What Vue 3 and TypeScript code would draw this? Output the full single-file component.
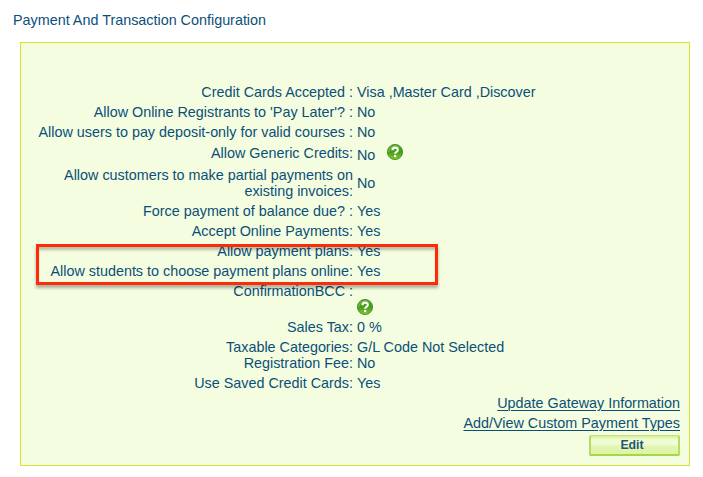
<script setup lang="ts">
interface Row {
  label: string
  value: string
  kind?: string
  help?: boolean
}

const rows: Row[] = [
  { label: 'Credit Cards Accepted :', value: 'Visa ,Master Card ,Discover' },
  { label: "Allow Online Registrants to 'Pay Later'? :", value: 'No' },
  { label: 'Allow users to pay deposit-only for valid courses :', value: 'No' },
  { label: 'Allow Generic Credits:', value: 'No', kind: 'credits', help: true },
  { label: 'Allow customers to make partial payments on existing invoices:', value: 'No', kind: 'double' },
  { label: 'Force payment of balance due? :', value: 'Yes' },
  { label: 'Accept Online Payments:', value: 'Yes' },
  { label: 'Allow payment plans:', value: 'Yes' },
  { label: 'Allow students to choose payment plans online:', value: 'Yes' },
  { label: 'ConfirmationBCC :', value: '', kind: 'bcc', help: true },
  { label: 'Sales Tax:', value: '0 %' },
  { label: 'Taxable Categories:', value: 'G/L Code Not Selected', kind: 'tight' },
  { label: 'Registration Fee:', value: 'No', kind: 'tight-low' },
  { label: 'Use Saved Credit Cards:', value: 'Yes' },
]
</script>

<template>
  <main class="page">
    <h1 class="title">Payment And Transaction Configuration</h1>
    <section class="panel">
      <div v-for="row in rows" :key="row.label" class="row" :class="row.kind">
        <div class="label">{{ row.label }}</div>
        <div class="value">
          <span v-if="row.value">{{ row.value }}</span>
          <svg v-if="row.help" class="help" viewBox="0 0 16 16" role="img" aria-label="Help">
            <defs>
              <linearGradient :id="'g-' + row.kind" x1="0" y1="0" x2="0" y2="1">
                <stop offset="0" stop-color="#4c9d20" />
                <stop offset="0.5" stop-color="#479d17" />
                <stop offset="1" stop-color="#86c838" />
              </linearGradient>
            </defs>
            <circle cx="8" cy="8" r="7.6" :fill="`url(#g-${row.kind})`" stroke="#358514" stroke-width="0.8" />
            <path d="M1.7 8A6.3 6.3 0 0 1 12.5 3.7" fill="none" stroke="#8cc655" stroke-width="0.9" />
            <path d="M5.4 6.2C5.4 2.8 10.8 2.9 10.8 5.9C10.8 8 8.1 7.7 8.1 9.8" fill="none" stroke="#fff" stroke-width="2.1" />
            <rect x="7" y="11" width="2.2" height="2.1" fill="#fff" />
          </svg>
        </div>
      </div>
      <nav class="actions">
        <a class="link" href="#">Update Gateway Information</a>
        <a class="link" href="#">Add/View Custom Payment Types</a>
        <button class="edit" type="button">Edit</button>
      </nav>
      <div class="highlight"></div>
    </section>
  </main>
</template>

<style>
body {
  background: #fff;
}
</style>

<style scoped>
.page {
  box-sizing: border-box;
  width: 703px;
  height: 477px;
  padding: 12px 13px 0 13px;
  overflow: hidden;
  color: #0b4f79;
  font: 14.37px/16px "Liberation Sans", Arial, sans-serif;
}
.title {
  margin: 0;
  font-size: inherit;
  font-weight: 400;
  line-height: 16px;
}
.panel {
  position: relative;
  box-sizing: border-box;
  width: 670px;
  height: 424px;
  margin: 14px 0 0 7px;
  padding: 39px 9px 0 15px;
  border: 1px solid #cfe82c;
  background: #f4fddf;
}
.row {
  display: grid;
  grid-template-columns: 317px 1fr;
  column-gap: 4px;
  align-items: center;
  height: 20px;
}
.label {
  text-align: right;
}
.value {
  display: flex;
  align-items: center;
  white-space: pre;
}
.credits {
  height: 24px;
}
.credits .label {
  padding-bottom: 2px;
}
.credits .value {
  padding-top: 2px;
}
.credits .help {
  margin: -6px 0 0 12px;
}
.double {
  height: 35px;
  padding-bottom: 2px;
  box-sizing: border-box;
}
.bcc {
  height: 36px;
  align-items: start;
  padding-top: 2px;
  box-sizing: border-box;
}
.bcc .help {
  margin-top: 16px;
}
.tight {
  height: 18px;
  align-items: end;
}
.tight-low {
  height: 18px;
  align-items: start;
}
.help {
  display: block;
  width: 16px;
  height: 16px;
}
.actions {
  display: flex;
  flex-direction: column;
  align-items: flex-end;
}
.link {
  color: inherit;
  line-height: 20px;
  text-decoration: underline;
  text-decoration-thickness: 1px;
  text-underline-offset: 2px;
}
.edit {
  box-sizing: border-box;
  width: 91px;
  height: 21px;
  margin-top: 2px;
  padding: 0 5px 0 0;
  border: 2px solid #b5de62;
  border-top: 1px solid #c3e67c;
  border-bottom-color: #a5d548;
  border-radius: 2px;
  background: linear-gradient(#d3ee93, #f1fbd4 20%, #f1fbd4 45%, #e2f5b0 60%, #dcf3a4);
  color: #1d5878;
  font: bold 12.3px/17px "Liberation Sans", Arial, sans-serif;
}
.highlight {
  position: absolute;
  left: 15px;
  top: 201px;
  box-sizing: border-box;
  width: 402px;
  height: 41px;
  border: 3px solid #fb2b0b;
  box-shadow: 0 3px 3px rgba(0, 0, 0, 0.3), inset 0 4px 3px -1px rgba(0, 0, 0, 0.25);
}
</style>
